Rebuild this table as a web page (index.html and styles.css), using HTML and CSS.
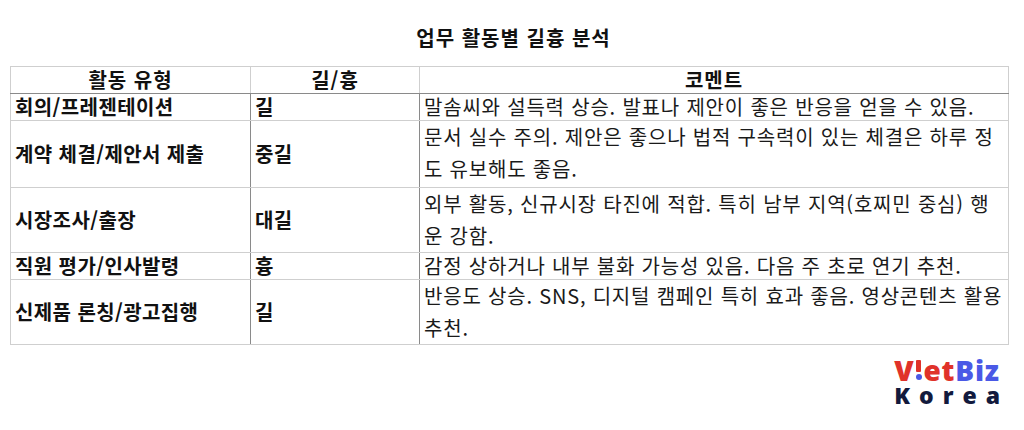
FILE: index.html
```html
<!DOCTYPE html>
<html lang="ko">
<head>
<meta charset="utf-8">
<link rel="stylesheet" href="styles.css">
</head>
<body>
<div class="page">
  <h1 class="title">업무 활동별 길흉 분석</h1>
  <table class="fortune">
    <thead>
      <tr>
        <th class="c1">활동 유형</th>
        <th class="c2">길/흉</th>
        <th class="c3">코멘트</th>
      </tr>
    </thead>
    <tbody>
      <tr class="one">
        <td class="c1">회의/프레젠테이션</td>
        <td class="c2">길</td>
        <td class="c3">말솜씨와 설득력 상승. 발표나 제안이 좋은 반응을 얻을 수 있음.</td>
      </tr>
      <tr class="two r2">
        <td class="c1">계약 체결/제안서 제출</td>
        <td class="c2">중길</td>
        <td class="c3">문서 실수 주의. 제안은 좋으나 법적 구속력이 있는 체결은 하루 정<br>도 유보해도 좋음.</td>
      </tr>
      <tr class="two">
        <td class="c1">시장조사/출장</td>
        <td class="c2">대길</td>
        <td class="c3">외부 활동, 신규시장 타진에 적합. 특히 남부 지역(호찌민 중심) 행<br>운 강함.</td>
      </tr>
      <tr class="one">
        <td class="c1">직원 평가/인사발령</td>
        <td class="c2">흉</td>
        <td class="c3">감정 상하거나 내부 불화 가능성 있음. 다음 주 초로 연기 추천.</td>
      </tr>
      <tr class="two last">
        <td class="c1">신제품 론칭/광고집행</td>
        <td class="c2">길</td>
        <td class="c3">반응도 상승. SNS, 디지털 캠페인 특히 효과 좋음. 영상콘텐츠 활용<br>추천.</td>
      </tr>
    </tbody>
  </table>
  <div class="logo-row">
    <div class="logo">
      <div class="logo-top"><span class="red">V</span><span class="bang"><span class="stem"></span><span class="dot"></span></span><span class="red">et</span><span class="blue">Biz</span></div>
      <div class="logo-bottom">Korea</div>
    </div>
  </div>
</div>
</body>
</html>
```

FILE: styles.css
```css
html, body {
  margin: 0;
  padding: 0;
  background: #ffffff;
}

body {
  font-family: "Noto Sans CJK KR", "Noto Sans", sans-serif;
  color: #111111;
}

.page {
  width: 999px;
  padding-left: 10px;
}

.title {
  margin: 0;
  box-sizing: border-box;
  text-align: center;
  font-size: 20px;
  line-height: 28px;
  font-weight: 700;
  letter-spacing: 1px;
  padding-top: 24px;
  height: 66px;
  padding-left: 8px;
}

.fortune {
  width: 999px;
  table-layout: fixed;
  border-collapse: collapse;
  border: 1px solid #cfcfcf;
  font-size: 20px;
}

.fortune th,
.fortune td {
  padding: 0 4px;
  vertical-align: middle;
  text-align: left;
}

.fortune th {
  font-weight: 700;
  text-align: center;
  line-height: 26px;
  letter-spacing: 1px;
  border: 1px solid #cfcfcf;
  border-bottom: 1px solid #8a8a8a;
}

.fortune td {
  border-top: 1px solid #cfcfcf;
  border-bottom: 1px solid #cfcfcf;
  border-left: 1px solid #8a8a8a;
  border-right: 1px solid #8a8a8a;
}

.fortune td:first-child {
  border-left: 1px solid #cfcfcf;
}

.fortune td:last-child {
  border-right: 1px solid #cfcfcf;
}

.fortune tr:first-child td {
  border-top: 1px solid #8a8a8a;
}

.c1 { width: 231px; }
.c2 { width: 160px; }

.fortune td.c1,
.fortune td.c2 {
  font-weight: 700;
  letter-spacing: 0.4px;
}

.fortune td.c3 {
  font-weight: 400;
  color: #1a1a1a;
  letter-spacing: 0.8px;
  white-space: nowrap;
}

.one td {
  height: 26px;
  line-height: 26px;
}

.two td {
  height: 64px;
  line-height: 32px;
}

.two td.c3 {
  vertical-align: top;
}

.r2 td {
  height: 66px;
}

.last td {
  height: 62px;
}

.logo-row {
  display: flex;
  justify-content: flex-end;
  padding-top: 12px;
  padding-right: 0;
}

.logo {
  display: flex;
  flex-direction: column;
  align-items: flex-start;
  font-family: "Open Sans", "DejaVu Sans", sans-serif;
  font-weight: 800;
}

.logo-top {
  display: flex;
  align-items: flex-end;
  font-size: 28px;
  letter-spacing: 0.8px;
  height: 27px;
  line-height: 27px;
}

.red { color: #e0322a; }
.blue { color: #4a59e6; }

.bang {
  display: inline-flex;
  flex-direction: column;
  align-items: center;
  width: 7px;
  margin: 0 1px 4px 1px;
  height: 20px;
  justify-content: flex-end;
}

.stem {
  width: 5px;
  height: 12px;
  background: #e0322a;
  border-radius: 1px;
}

.dot {
  width: 6px;
  height: 6px;
  margin-top: 2px;
  border-radius: 50%;
  background: #4a59e6;
}

.logo-bottom {
  font-size: 23px;
  color: #121a3d;
  letter-spacing: 9px;
  height: 23px;
  line-height: 23px;
}
```
